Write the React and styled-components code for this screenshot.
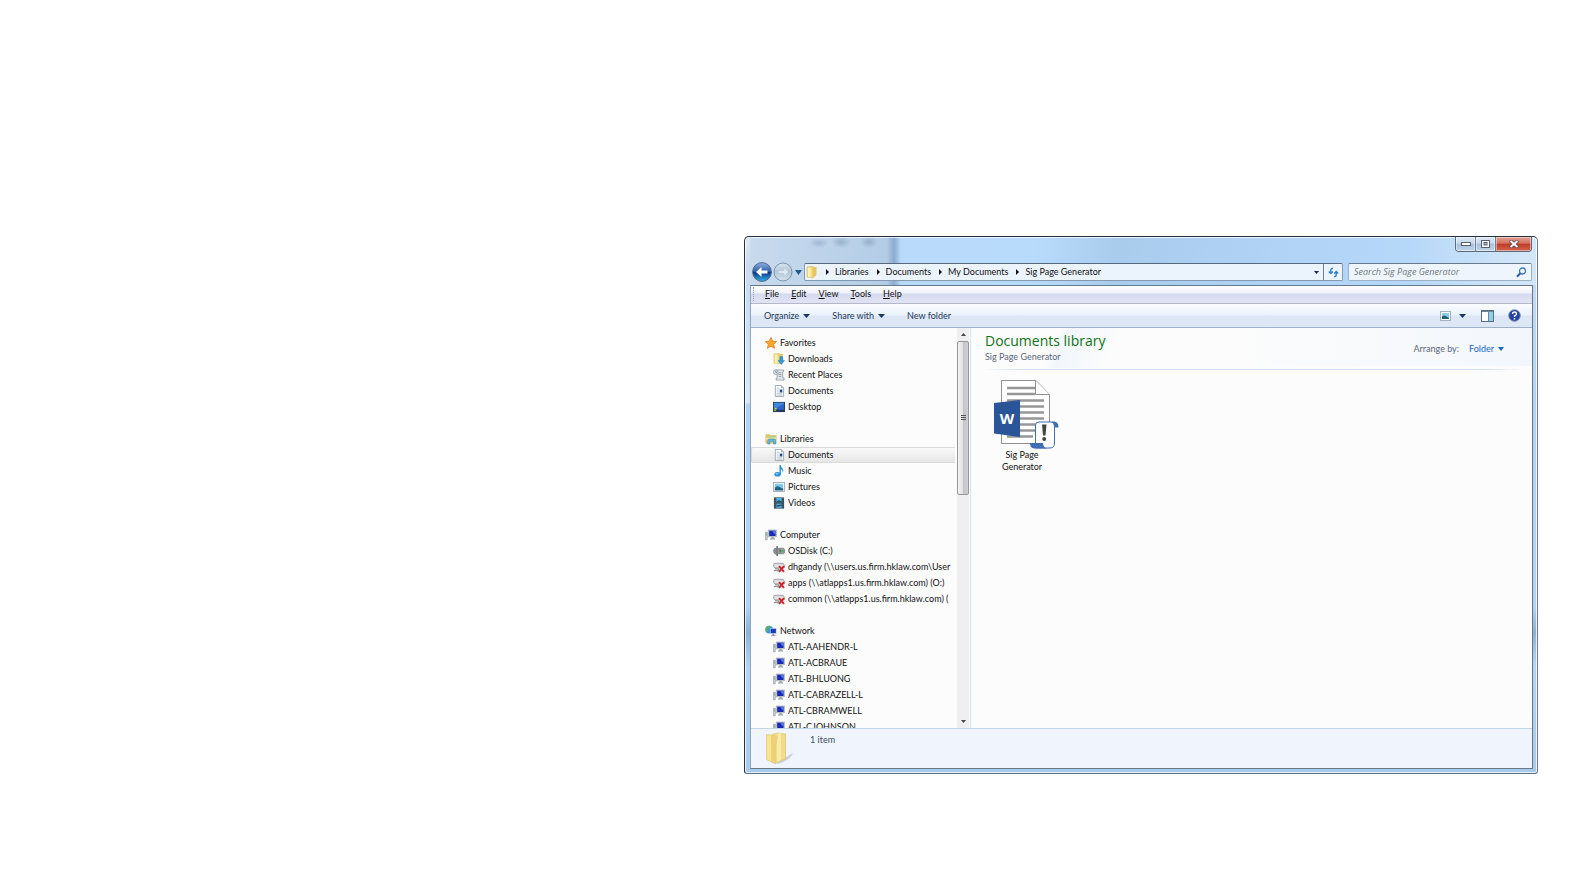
import React from "react";
import styled, { createGlobalStyle, css } from "styled-components";

const Global = createGlobalStyle`
  * { box-sizing: border-box; }
  body { margin: 0; background: #fff; }
  body, button, input { font-family: Lato, "Open Sans", sans-serif; font-size: 9px; line-height: 16px; }
  button { border: 0; padding: 0; background: none; color: inherit; }
  a { color: inherit; text-decoration: none; }
  ul { list-style: none; margin: 0; padding: 0; }
  svg { display: block; flex: none; }
`;

const Page = styled.main`
  display: flex;
  justify-content: flex-end;
  height: 100vh;
  min-height: 600px;
  padding: 236px 46px 117px;
`;

const Window = styled.section`
  flex: 0 0 calc(50vw + 2px);
  min-width: 600px;
  display: flex;
  flex-direction: column;
  padding: 0 4px 4px 5px;
  border: 1px solid #26313f;
  border-right-color: #6f7d8c;
  border-bottom-color: #5d7186;
  border-radius: 5px 5px 3px 3px;
  box-shadow: inset 0 0 0 1px rgba(255, 255, 255, 0.75);
  background:
    radial-gradient(ellipse 10px 5px at 74px 6px, rgba(80, 105, 135, 0.25), transparent),
    radial-gradient(ellipse 10px 6px at 96px 5px, rgba(80, 105, 135, 0.3), transparent),
    radial-gradient(ellipse 9px 6px at 124px 5px, rgba(80, 105, 135, 0.3), transparent),
    linear-gradient(90deg, transparent 142px, rgba(80, 115, 155, 0.4) 149px, transparent 156px) 0 0 / 100% 48px no-repeat,
    linear-gradient(rgba(255, 255, 255, 0.4), rgba(255, 255, 255, 0) 30px, rgba(255, 255, 255, 0.5) 165px, transparent 168px) 0 0 / 5px 100% no-repeat,
    linear-gradient(90deg, #c9dbee 0, #b3cce6 145px, #b9dafa 155px, #b9dbfb 290px, #a9cced 370px, #b1d4f6 540px, #b5d7f8 660px, #d3e6f8 780px) 0 0 / 100% 48px no-repeat,
    linear-gradient(#c9def3, #b2d2f1 170px, #b2d2f1 370px, #8fb2d4 395px, #b5d4f2 430px, #a8cae9);
`;

const TitleBar = styled.header`
  display: flex;
  justify-content: flex-end;
  height: 26px;
  padding-right: 1px;
`;

const WindowButtons = styled.div`
  display: flex;
  height: 15px;
  border: 1px solid #5b6b7e;
  border-top: 0;
  border-radius: 0 0 4px 4px;
  overflow: hidden;
`;

const WindowButton = styled.button`
  display: grid;
  place-items: center;
  width: ${(p) => (p.$close ? 35 : 20)}px;
  border-right: ${(p) => (p.$close ? "0" : "1px solid #6d7f94")};
  box-shadow: inset 0 0 0 1px rgba(255, 255, 255, 0.45);
  background: ${(p) =>
    p.$close
      ? "linear-gradient(#e3a093, #d5725f 45%, #bf3b24 50%, #d4644b)"
      : "linear-gradient(#dde9f5, #c6d8ea 45%, #a8bfd8 50%, #c0d6ec)"};
`;

const NavBar = styled.nav`
  display: flex;
  align-items: center;
  height: 18px;
  margin-bottom: 4px;
  padding: 0 1px;
`;

const NavButton = styled.button`
  display: grid;
  place-items: center;
  flex: none;
  width: ${(p) => (p.$small ? 11 : 21)}px;
  height: 20px;
`;

const AddressBar = styled.div`
  flex: 1;
  display: flex;
  height: 18px;
  border: 1px solid #8499af;
  border-top-color: #56697e;
  border-radius: 2px;
  background: #ebf3fc;
`;

const Crumbs = styled.div`
  flex: 1;
  display: flex;
  align-items: center;
  padding-left: 1px;
`;

const CrumbLink = styled.a`
  display: flex;
  align-items: center;
  color: #111;
  white-space: nowrap;
  svg { margin: 0 6px 0 8px; }
`;

const BarButton = styled.button`
  display: grid;
  place-items: center;
  width: ${(p) => p.$w}px;
  border-left: ${(p) => (p.$divided ? "1px solid #6b7f95" : "0")};
`;

const SearchBox = styled.label`
  display: flex;
  align-items: center;
  flex: 0 0 184px;
  height: 18px;
  margin-left: 5px;
  padding: 0 4px;
  border: 1px solid #9db0c4;
  border-top-color: #667a90;
  border-radius: 2px;
  background: #eef5fc;
`;

const SearchInput = styled.input`
  flex: 1;
  min-width: 0;
  padding: 0 1px;
  border: 0;
  outline: 0;
  background: transparent;
  font-family: "Open Sans", "Noto Sans", sans-serif;
  font-style: italic;
  &::placeholder { color: #73787e; opacity: 1; }
`;

const Client = styled.div`
  flex: 1;
  min-height: 0;
  display: flex;
  flex-direction: column;
  border: 1px solid #66788c;
  border-left-color: #8fa5bb;
  background: #fcfcfc;
`;

const MenuBar = styled.div`
  display: flex;
  align-items: center;
  flex: none;
  height: 18px;
  padding: 0 0 1px 2px;
  border-bottom: 1px solid #b3b9c8;
  background: linear-gradient(#fff, #f0f2fa 7px, #d6daee 8px, #e2e4f5);
`;

const Grip = styled.span`
  width: 2px;
  height: 14px;
  margin-right: 10px;
  border-left: 1px dotted #9aa1b5;
`;

const MenuItem = styled.button`
  height: 16px;
  margin-right: 12px;
  color: #111;
`;

const ToolBar = styled.div`
  display: flex;
  align-items: center;
  flex: none;
  height: 24px;
  padding: 0 11px 0 13px;
  border-bottom: 1px solid #9fb1c8;
  background: linear-gradient(#fbfdff, #eaf2fb 11px, #dce6f4 12px, #dde7f5);
  color: #1e395b;
`;

const ToolButton = styled.button`
  display: flex;
  align-items: center;
  gap: 4px;
  height: 20px;
  margin-right: ${(p) => p.$gap || 0}px;
`;

const Spacer = styled.span`
  flex: 1;
`;

const Body = styled.div`
  flex: 1;
  min-height: 0;
  display: flex;
`;

const TreePane = styled.aside`
  flex: 0 0 206px;
  overflow: hidden;
  padding: 7px 2px 0 0;
  color: #111;
`;

const TreeGroup = styled.ul`
  margin-bottom: 16px;
`;

const TreeLink = styled.a`
  display: flex;
  align-items: center;
  gap: 3px;
  height: 16px;
  padding-left: ${(p) => (p.$root ? 13 : 21)}px;
  border: 1px solid transparent;
  border-right: 0;
  white-space: nowrap;
  ${(p) =>
    p.$selected &&
    css`
      border-color: #dadada;
      border-radius: 2px 0 0 2px;
      background: linear-gradient(#f9f9f9, #e6e6e6);
    `}
`;

const ScrollTrack = styled.div`
  flex: none;
  display: flex;
  flex-direction: column;
  width: 12px;
  background: #efefef;
`;

const ScrollButton = styled.button`
  display: grid;
  place-items: center;
  height: 13px;
`;

const ScrollThumb = styled.div`
  flex: 0 0 154px;
  display: grid;
  place-items: center;
  border: 1px solid #979797;
  border-radius: 2px;
  background: linear-gradient(90deg, #f3f3f3, #e2e2e4 45%, #c5c5c9 55%, #d0d0d3);
`;

const Library = styled.div`
  flex: 1;
  min-width: 0;
  margin-left: 1px;
  border-left: 1px solid #d5e4f3;
  padding: 0 9px 0 12px;
  background:
    linear-gradient(115deg, transparent 24%, #f1f6fb 27%, transparent 40%) 0 0 / 360px 40px no-repeat,
    linear-gradient(90deg, transparent 45%, #f3f7fc) 0 0 / 100% 38px no-repeat;
`;

const LibraryHead = styled.div`
  display: flex;
  justify-content: space-between;
  height: 42px;
  padding: 3px 19px 0 2px;
  border-bottom: 1px solid;
  border-image: linear-gradient(90deg, transparent, #cddff0 8%, #cddff0 92%, transparent) 1;
`;

const LibraryTitle = styled.h1`
  margin: 0;
  font-family: "Open Sans", "Noto Sans", sans-serif;
  font-size: 14px;
  line-height: 20px;
  font-weight: 400;
  color: #0f7317;
`;

const LibraryPath = styled.p`
  margin: 0;
  line-height: 12px;
  color: #5a6779;
`;

const Arrange = styled.div`
  display: flex;
  align-items: center;
  gap: 10px;
  height: 36px;
  color: #5a6779;
`;

const ArrangeButton = styled.button`
  display: flex;
  align-items: center;
  gap: 4px;
  color: #1766c8;
`;

const FileLink = styled.a`
  display: flex;
  flex-direction: column;
  align-items: center;
  width: 78px;
  padding-top: 9px;
  line-height: 12px;
  text-align: center;
  color: #111;
`;

const FileName = styled.span`
  width: 60px;
`;

const StatusBar = styled.footer`
  display: flex;
  flex: none;
  height: 40px;
  padding: 3px 0 0 14px;
  border-top: 1px solid #c3d6e8;
  background: #f0f4fc;
  color: #3c5068;
`;

const StatusText = styled.span`
  margin-left: 15px;
`;

const Caret = ({ color = "#1e395b", w = 7, h = 4, up }) => (
  <svg width={w} height={h} viewBox="0 0 8 4" preserveAspectRatio="none" aria-hidden="true">
    <path d={up ? "M0 4L4 0L8 4Z" : "M0 0H8L4 4Z"} fill={color} />
  </svg>
);

const Chevron = () => (
  <svg width="3" height="6" viewBox="0 0 3 6" aria-hidden="true">
    <path d="M0 0L3 3L0 6Z" fill="#111" />
  </svg>
);

const FolderGlyph = () => (
  <g>
    <path d="M1 1L7 0.5V12L1 11Z" fill="#f5dd83" stroke="#d3b255" strokeWidth=".6" />
    <path d="M7 1H10.5V9L7 12Z" fill="#e6c560" />
    <path d="M2 1.5L4.5 2V11.5L2 11Z" fill="#fff2b5" />
  </g>
);

const glyphs = {
  star: <path d="M6.5 .5L8.3 4.6L12.6 5L9.4 7.9L10.4 12.3L6.5 9.9L2.6 12.3L3.6 7.9L.4 5L4.7 4.6Z" fill="#fba92d" stroke="#dc741a" strokeWidth=".8" />,
  downloads: (
    <g>
      <FolderGlyph />
      <path d="M7.5 4H10.5V8H12.5L9 12.5L5.5 8H7.5Z" fill="#2e9de2" stroke="#176fae" strokeWidth=".5" />
    </g>
  ),
  recent: (
    <g>
      <path d="M3 1H11.5V3H10.5V9.5H12V12H3.5V10H4.5V3H3Z" fill="#e3e7ea" stroke="#8b9298" strokeWidth=".8" />
      <path d="M6 4H9M6 6H9M6 8H9" stroke="#8d98a3" />
      <circle cx="3" cy="3.5" r="2.5" fill="#d5e5ef" stroke="#7e8f9b" strokeWidth=".7" />
      <path d="M3 2V3.7H4.3" stroke="#48606f" strokeWidth=".6" fill="none" />
    </g>
  ),
  document: (
    <g>
      <path d="M2.5 .5H9L11.5 3V12.5H2.5Z" fill="#fff" stroke="#83909f" strokeWidth=".8" />
      <path d="M9 .5V3H11.5" fill="#e4e9ee" stroke="#83909f" strokeWidth=".7" />
      <path d="M4 3.5H7M4 5.5H6M4 7.5H6M4 9.5H10M4 11H10" stroke="#9fb0c8" strokeWidth=".8" />
      <rect x="6.5" y="4.5" width="4" height="4" fill="#cde3f5" />
      <rect x="7.5" y="5" width="2.5" height="3" fill="#264c85" />
    </g>
  ),
  desktop: (
    <g>
      <rect x=".5" y="1.5" width="12" height="10" fill="#2a64c5" stroke="#1b355e" />
      <path d="M1 9L12 3V2H1Z" fill="#4387df" />
      <path d="M1 9.5H12V11.5H1Z" fill="#253552" />
      <path d="M1 9H3.5V11H1Z" fill="#78b843" />
      <path d="M2 7.5H4V8.7H2Z" fill="#eec653" />
    </g>
  ),
  libraries: (
    <g>
      <path d="M1 2H5L6 3H12V11H1Z" fill="#f3d36e" stroke="#c9a145" strokeWidth=".7" />
      <path d="M2 3.5H11V6H2Z" fill="#9ccf84" />
      <path d="M1 5H12L11.5 7H1.5Z" fill="#f9e39a" />
      <path d="M3 12V8Q3 6.5 5 6.5H9.5Q11.5 6.5 11.5 8V12H9.3V9H5.2V12Z" fill="#60b8e9" stroke="#2f85bb" strokeWidth=".6" />
    </g>
  ),
  music: (
    <g fill="#2b93d9">
      <ellipse cx="5" cy="10" rx="3.5" ry="2.5" />
      <path d="M7 0H8.5Q8.5 2.5 10.5 4Q12 6 10.5 8.5Q11 5.5 8.5 4.5V10H7Z" />
      <ellipse cx="4.3" cy="9.4" rx="1.5" ry=".8" fill="#8ad0f5" />
    </g>
  ),
  pictures: (
    <g>
      <rect x=".5" y="1.5" width="12" height="10" fill="#fff" stroke="#8d959d" strokeWidth=".8" />
      <rect x="2" y="3" width="9" height="7" fill="#7fc8ee" />
      <path d="M2 7L5 5.5L11 8.5V10H2Z" fill="#1f6f86" />
      <path d="M2 9H11V10H2Z" fill="#2c4b8b" />
    </g>
  ),
  videos: (
    <g>
      <rect x="1" y=".5" width="11" height="12" fill="#263238" />
      <rect x="3.5" y="1" width="6" height="5" fill="#4fb2e3" />
      <rect x="3.5" y="7" width="6" height="5" fill="#4fa9dd" />
      <path d="M4 4.5L6.5 3.5L9.5 5V6H4ZM4 9L9.5 8V9.5L4 10.5Z" fill="#1f4b63" />
      <path d="M2.2 1.5V12M10.8 1.5V12" stroke="#b7c7cc" strokeWidth="1" strokeDasharray="1 1.2" />
    </g>
  ),
  computer: (
    <g>
      <path d="M.5 3.5H2.5V11.5H.5Z" fill="#d3d7da" stroke="#858b91" strokeWidth=".6" />
      <path d="M1 5H2V7H1Z" fill="#6ea955" />
      <path d="M3.5 1H12.5V8.5H3.5Z" fill="#c7cdd5" stroke="#8c949e" strokeWidth=".5" />
      <path d="M4.5 1.8H11.5V7.6H4.5Z" fill="#1b2cae" />
      <path d="M8 1.8H11.5V6Q9 5.5 8 1.8Z" fill="#5878e2" />
      <path d="M7 8.5H9.5V10H11V11.5H5.5V10H7Z" fill="#9ea5ad" />
    </g>
  ),
  disk: (
    <g>
      <path d="M3 5L5 3.5H11.5L12.7 5V8.5L11.5 9.5H3Z" fill="#989da0" stroke="#686e72" strokeWidth=".7" />
      <path d="M4.5 1V12" stroke="#7a8084" strokeWidth="1.8" />
      <path d="M.5 6.5Q.5 3 4.5 3V5Q2.5 5 2.5 6.5T4.5 8.5V10.5Q.5 10 .5 6.5Z" fill="#8d9396" stroke="#6b7174" strokeWidth=".5" />
      <path d="M7 5H8.5V8H7Z" fill="#5b6164" />
      <path d="M9.5 5.5H11.5V7.5H9.5Z" fill="#45b350" />
    </g>
  ),
  netdrive: (
    <g>
      <path d="M.8 3Q.8 2.5 2 2.5H11L12.3 4.5V7.5H2L.8 6Z" fill="#dfe1e3" stroke="#85898d" strokeWidth=".8" />
      <path d="M2 8.5H6V10.5H1" stroke="#8f969c" strokeWidth="1.3" fill="none" />
      <path d="M6.5 5.5L12 11.8M12 5.5L6.5 11.8" stroke="#d21f22" strokeWidth="2" />
    </g>
  ),
  network: (
    <g>
      <circle cx="4.5" cy="5" r="4.3" fill="#3c9bd8" />
      <path d="M1 3Q3 0 6 1L5 3.5L3 4L3.5 6L2 7Q0 6 1 3Z" fill="#5fb159" />
      <path d="M5.5 3.5H12.5V9.5H5.5Z" fill="#b6c6e3" />
      <path d="M6.2 4.2H11.8V8.8H6.2Z" fill="#1c39bd" />
      <path d="M8 9.5H10V11H11.5V12H6.5V11H8Z" fill="#7f91a9" />
    </g>
  ),
};

const Icon = ({ name }) => (
  <svg width="12" height="12" viewBox="0 0 13 13" aria-hidden="true">
    {glyphs[name]}
  </svg>
);

const tree = [
  ["star", "Favorites", [["downloads", "Downloads"], ["recent", "Recent Places"], ["document", "Documents"], ["desktop", "Desktop"]]],
  ["libraries", "Libraries", [["document", "Documents", true], ["music", "Music"], ["pictures", "Pictures"], ["videos", "Videos"]]],
  ["computer", "Computer", [
    ["disk", "OSDisk (C:)"],
    ["netdrive", "dhgandy (\\\\users.us.firm.hklaw.com\\User"],
    ["netdrive", "apps (\\\\atlapps1.us.firm.hklaw.com) (O:)"],
    ["netdrive", "common (\\\\atlapps1.us.firm.hklaw.com) ("],
  ]],
  ["network", "Network", ["ATL-AAHENDR-L", "ATL-ACBRAUE", "ATL-BHLUONG", "ATL-CABRAZELL-L", "ATL-CBRAMWELL", "ATL-CJOHNSON"].map((n) => ["computer", n])],
];

const crumbs = ["Libraries", "Documents", "My Documents", "Sig Page Generator"];
const menus = ["File", "Edit", "View", "Tools", "Help"];

const BackIcon = () => (
  <svg width="20" height="20" viewBox="0 0 20 20" aria-hidden="true">
    <defs>
      <linearGradient id="back" x2="0" y2="1">
        <stop offset="0" stopColor="#8fb2e2" />
        <stop offset=".48" stopColor="#2c5cab" />
        <stop offset=".52" stopColor="#0c3484" />
        <stop offset="1" stopColor="#35b4ee" />
      </linearGradient>
    </defs>
    <circle cx="10" cy="10" r="9.4" fill="url(#back)" stroke="#51698b" />
    <path d="M4 10L9.5 5V8.5H15.5V11.5H9.5V15Z" fill="#fff" />
  </svg>
);

const ForwardIcon = () => (
  <svg width="20" height="20" viewBox="0 0 20 20" aria-hidden="true">
    <defs>
      <linearGradient id="forward" x2="0" y2="1">
        <stop offset="0" stopColor="#d9e4ee" />
        <stop offset=".5" stopColor="#b3c6d8" />
        <stop offset="1" stopColor="#d5e4f0" />
      </linearGradient>
    </defs>
    <circle cx="10" cy="10" r="9" fill="url(#forward)" stroke="#8193a6" />
    <path d="M16 10L10.5 5.5V8.5H5V11.5H10.5V14.5Z" fill="#dbe6ef" stroke="#a9bccd" strokeWidth=".5" />
  </svg>
);

const WordScriptIcon = () => (
  <svg width="74" height="70" viewBox="-8 0 74 70" aria-hidden="true">
    <path d="M8.5 1.5H43L56.5 15.5V64.5H8.5Z" fill="#fff" stroke="#909090" />
    <path d="M42.5 1.5V15.5H56.5" fill="#fff" stroke="#909090" />
    <path d="M14 9H42M14 15H42M14 21.5H51M14 27.5H51M14 33.5H51M14 39.5H51M14 45.5H51M14 51.5H51M14 57.5H40" stroke="#969696" strokeWidth="2.4" />
    <path d="M1 24L27 21V58L1 54.5Z" fill="#2a5699" />
    <text x="14" y="45" textAnchor="middle" fontFamily="Open Sans, sans-serif" fontSize="15" fontWeight="700" fill="#fff">W</text>
    <path d="M42.5 69V46Q42.5 43 46 43H62Q60.5 44 61.5 49V64Q61.5 69 57 69Z" fill="#fff" stroke="#3f6db5" />
    <path d="M58 43H62Q65.5 43 65.5 48.5H61.5Q61.5 44 58 43Z" fill="#3f6db5" />
    <path d="M37 64H50Q50 69 55 69.5H41Q37 69 37 64Z" fill="#3f6db5" />
    <path d="M49 45.5H53.5L52.5 56.5H50Z" fill="#444" />
    <circle cx="51.2" cy="60" r="2" fill="#444" />
  </svg>
);

const BigFolder = () => (
  <svg width="30" height="33" viewBox="0 0 30 33" aria-hidden="true">
    <path d="M11 31L28 21Q26 28 13 32Z" fill="#c3c8d0" opacity=".8" />
    <path d="M7 2.5L13 1L20.5 2V27L10 31Z" fill="#f3dc86" stroke="#d9bb62" strokeWidth=".6" />
    <path d="M13 1L16 1.5V28L12 30V8Z" fill="#fbeaa8" />
    <path d="M1.5 2.5L9 3.5L12.5 5L10.5 12V32L1.5 27.5Z" fill="#f8e495" stroke="#d8bd64" strokeWidth=".6" />
    <path d="M6 3.5L12.5 5L10.5 12V32L6 29.5Z" fill="#ecd07a" />
  </svg>
);

export default function App() {
  return (
    <>
      <Global />
      <Page>
        <Window aria-label="Sig Page Generator">
          <TitleBar>
            <WindowButtons>
              <WindowButton aria-label="Minimize">
                <svg width="10" height="5"><rect x=".5" y=".5" width="9" height="3" fill="#fff" stroke="#556170" /></svg>
              </WindowButton>
              <WindowButton aria-label="Maximize">
                <svg width="9" height="8"><rect x=".5" y=".5" width="8" height="7" fill="#fff" stroke="#556170" /><rect x="3" y="2.5" width="3" height="2.5" fill="#b7cbdf" stroke="#556170" /></svg>
              </WindowButton>
              <WindowButton $close aria-label="Close">
                <svg width="10" height="8" viewBox="0 0 10 8"><path d="M1 .5L9 7.5M9 .5L1 7.5" stroke="#5d4650" strokeWidth="3.4" /><path d="M1.5 1L8.5 7M8.5 1L1.5 7" stroke="#fff" strokeWidth="1.8" /></svg>
              </WindowButton>
            </WindowButtons>
          </TitleBar>
          <NavBar aria-label="Location">
            <NavButton aria-label="Back"><BackIcon /></NavButton>
            <NavButton aria-label="Forward"><ForwardIcon /></NavButton>
            <NavButton $small aria-label="Recent pages"><Caret color="#20588f" h={5} /></NavButton>
            <AddressBar>
              <Crumbs>
                <svg width="12" height="13" viewBox="0 0 12 13" aria-hidden="true"><FolderGlyph /></svg>
                {crumbs.map((c) => (
                  <CrumbLink href="#" key={c}><Chevron />{c}</CrumbLink>
                ))}
              </Crumbs>
              <BarButton $w={14} aria-label="Previous locations"><Caret color="#16205e" w={5} h={3} /></BarButton>
              <BarButton $w={19} $divided aria-label="Refresh">
                <svg width="11" height="11" viewBox="0 0 11 11" fill="none" stroke="#2f7fca" strokeWidth="1.4"><path d="M5 1.5Q2.5 1 2.8 4V6M.8 4.5L2.8 6.5L4.8 4.5M6 9.5Q8.5 10 8.2 7V5M6.2 6.5L8.2 4.5L10.2 6.5" /></svg>
              </BarButton>
            </AddressBar>
            <SearchBox>
              <SearchInput type="text" aria-label="Search" placeholder="Search Sig Page Generator" />
              <svg width="11" height="11" viewBox="0 0 11 11" fill="none" aria-hidden="true"><circle cx="6.5" cy="4" r="3" stroke="#3979bb" strokeWidth="1.3" /><path d="M4.3 6.3L1 9.8" stroke="#2c61a3" strokeWidth="2" /></svg>
            </SearchBox>
          </NavBar>
          <Client>
            <MenuBar>
              <Grip />
              {menus.map((m) => (
                <MenuItem key={m}><u>{m[0]}</u>{m.slice(1)}</MenuItem>
              ))}
            </MenuBar>
            <ToolBar>
              <ToolButton $gap={22}>Organize <Caret /></ToolButton>
              <ToolButton $gap={22}>Share with <Caret /></ToolButton>
              <ToolButton>New folder</ToolButton>
              <Spacer />
              <ToolButton $gap={8} aria-label="Change view">
                <svg width="11" height="10"><rect x=".5" y=".5" width="10" height="9" fill="#fff" stroke="#a3b1c1" /><rect x="2" y="2" width="7" height="6" fill="#8ccbed" /><path d="M2 5L5 4.5L9 7V8H2Z" fill="#22636e" /></svg>
              </ToolButton>
              <ToolButton $gap={15} aria-label="More view options"><Caret /></ToolButton>
              <ToolButton $gap={14} aria-label="Show the preview pane">
                <svg width="13" height="12"><rect x=".5" y=".5" width="12" height="11" fill="#fff" stroke="#596d83" /><rect x="8" y="1" width="4" height="10" fill="#8fd0ea" /><path d="M7.5 1V11M1 1.5H12" stroke="#71859a" /></svg>
              </ToolButton>
              <ToolButton aria-label="Get help">
                <svg width="13" height="13"><circle cx="6.5" cy="6.5" r="5.8" fill="#2342a6" stroke="#8290a8" /><path d="M4.6 5Q4.6 3 6.5 3T8.5 5Q8.5 6 6.5 7V8M6.5 9V10.5" stroke="#fff" strokeWidth="1.4" fill="none" /></svg>
              </ToolButton>
            </ToolBar>
            <Body>
              <TreePane aria-label="Folders">
                {tree.map(([icon, label, items]) => (
                  <TreeGroup key={label}>
                    <li><TreeLink $root href="#"><Icon name={icon} />{label}</TreeLink></li>
                    {items.map(([i, name, selected]) => (
                      <li key={name}><TreeLink href="#" $selected={selected}><Icon name={i} />{name}</TreeLink></li>
                    ))}
                  </TreeGroup>
                ))}
              </TreePane>
              <ScrollTrack>
                <ScrollButton aria-label="Scroll up"><Caret up color="#444" w={5} h={3} /></ScrollButton>
                <ScrollThumb>
                  <svg width="5" height="6"><path d="M0 .5H5M0 2.5H5M0 4.5H5" stroke="#555" /></svg>
                </ScrollThumb>
                <Spacer />
                <ScrollButton aria-label="Scroll down"><Caret color="#444" w={5} h={3} /></ScrollButton>
              </ScrollTrack>
              <Library>
                <LibraryHead>
                  <div>
                    <LibraryTitle>Documents library</LibraryTitle>
                    <LibraryPath>Sig Page Generator</LibraryPath>
                  </div>
                  <Arrange>
                    Arrange by:
                    <ArrangeButton>Folder <Caret color="#1766c8" w={6} /></ArrangeButton>
                  </Arrange>
                </LibraryHead>
                <FileLink href="#">
                  <WordScriptIcon />
                  <FileName>Sig Page Generator</FileName>
                </FileLink>
              </Library>
            </Body>
            <StatusBar>
              <BigFolder />
              <StatusText>1 item</StatusText>
            </StatusBar>
          </Client>
        </Window>
      </Page>
    </>
  );
}
